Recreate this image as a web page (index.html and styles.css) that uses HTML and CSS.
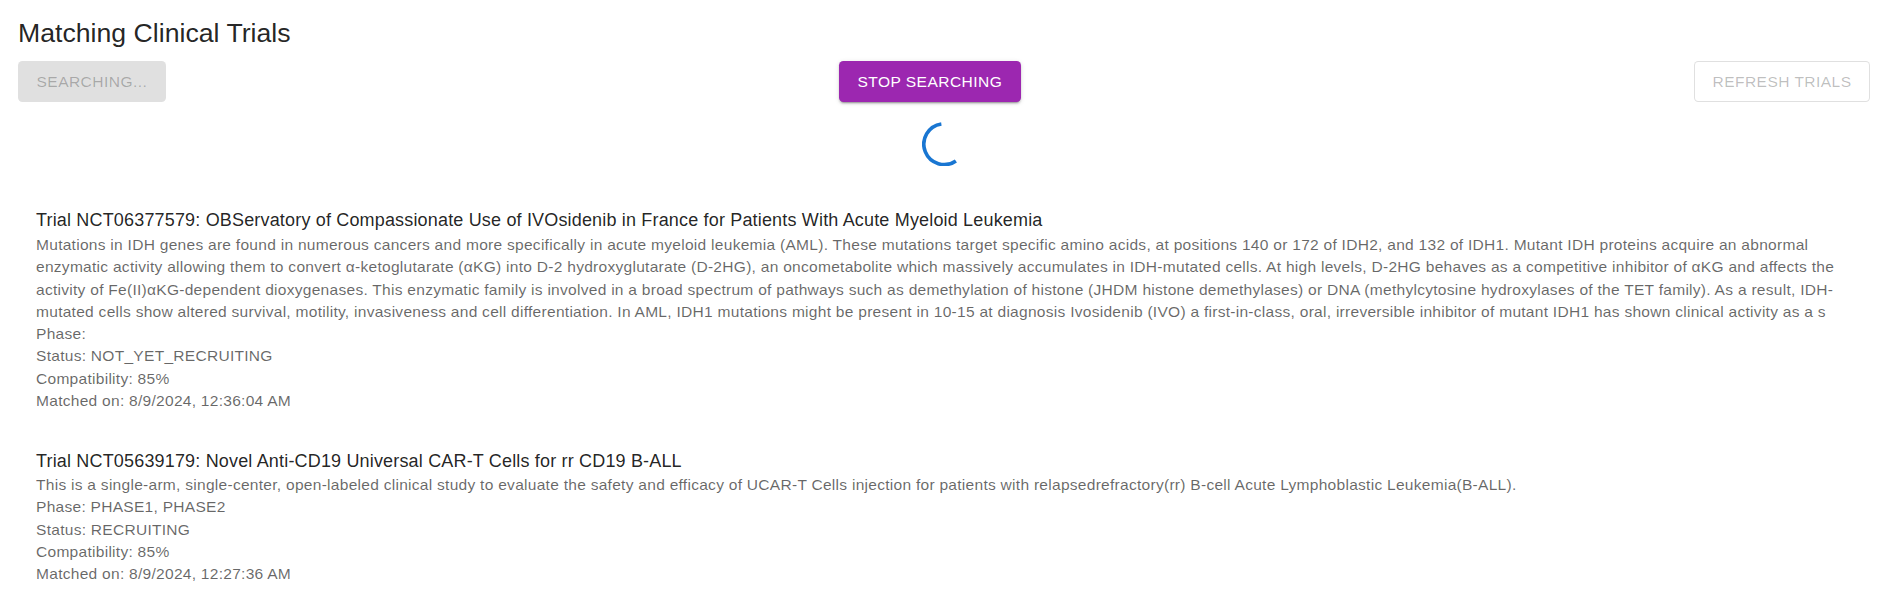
FILE: index.html
```html
<!DOCTYPE html>
<html lang="en">
<head>
<meta charset="utf-8">
<title>Matching Clinical Trials</title>
<link rel="stylesheet" href="styles.css">
</head>
<body>
<div class="page">
  <h1 class="heading">Matching Clinical Trials</h1>
  <div class="actions">
    <button class="btn btn-disabled" disabled>Searching...</button>
    <button class="btn btn-primary">Stop Searching</button>
    <button class="btn btn-outlined" disabled>Refresh Trials</button>
  </div>
  <div class="spinner-wrap">
    <svg class="spinner" viewBox="22 22 44 44" aria-hidden="true">
      <path d="M55.6 60.55 A20.2 20.2 0 1 1 41.19 24" fill="none" stroke="#1976d2" stroke-width="3.6"/>
    </svg>
  </div>
  <ul class="trials">
    <li class="trial">
      <div class="trial-title">Trial NCT06377579: OBServatory of Compassionate Use of IVOsidenib in France for Patients With Acute Myeloid Leukemia</div>
      <div class="trial-body">
        <div>Mutations in IDH genes are found in numerous cancers and more specifically in acute myeloid leukemia (AML). These mutations target specific amino acids, at positions 140 or 172 of IDH2, and 132 of IDH1. Mutant IDH proteins acquire an abnormal enzymatic activity allowing them to convert α-ketoglutarate (αKG) into D-2 hydroxyglutarate (D-2HG), an oncometabolite which massively accumulates in IDH-mutated cells. At high levels, D-2HG behaves as a competitive inhibitor of αKG and affects the activity of Fe(II)αKG-dependent dioxygenases. This enzymatic family is involved in a broad spectrum of pathways such as demethylation of histone (JHDM histone demethylases) or DNA (methylcytosine hydroxylases of the TET family). As a result, IDH-mutated cells show altered survival, motility, invasiveness and cell differentiation. In AML, IDH1 mutations might be present in 10-15 at diagnosis Ivosidenib (IVO) a first-in-class, oral, irreversible inhibitor of mutant IDH1 has shown clinical activity as a s</div>
        <div>Phase: </div>
        <div>Status: NOT_YET_RECRUITING</div>
        <div>Compatibility: 85%</div>
        <div>Matched on: 8/9/2024, 12:36:04 AM</div>
      </div>
    </li>
    <li class="trial">
      <div class="trial-title">Trial NCT05639179: Novel Anti-CD19 Universal CAR-T Cells for rr CD19 B-ALL</div>
      <div class="trial-body">
        <div>This is a single-arm, single-center, open-labeled clinical study to evaluate the safety and efficacy of UCAR-T Cells injection for patients with relapsedrefractory(rr) B-cell Acute Lymphoblastic Leukemia(B-ALL).</div>
        <div>Phase: PHASE1, PHASE2</div>
        <div>Status: RECRUITING</div>
        <div>Compatibility: 85%</div>
        <div>Matched on: 8/9/2024, 12:27:36 AM</div>
      </div>
    </li>
  </ul>
</div>
</body>
</html>
```

FILE: styles.css
```css
html, body {
  margin: 0;
  padding: 0;
  background: #fff;
}
body {
  font-family: "Liberation Sans", Arial, sans-serif;
  color: rgba(0, 0, 0, 0.87);
}
.page {
  padding: 0 12px 0 18px;
}
.heading {
  margin: 18px 0 0;
  font-size: 26.67px;
  line-height: 31px;
  font-weight: 400;
  color: rgba(0, 0, 0, 0.87);
}
.actions {
  margin-top: 12px;
  display: flex;
  justify-content: space-between;
  align-items: center;
}
.btn {
  font-family: "Liberation Sans", Arial, sans-serif;
  font-size: 15.55px;
  letter-spacing: 0.02857em;
  text-transform: uppercase;
  line-height: 27.2px;
  padding: 6.9px 18.5px;
  border-radius: 4.4px;
  border: 0;
  margin: 0;
  cursor: pointer;
}
.btn-disabled {
  background: rgba(0, 0, 0, 0.12);
  color: rgba(0, 0, 0, 0.26);
  cursor: default;
}
.btn-primary {
  background: #9c27b0;
  color: #fff;
  box-shadow: 0 3px 1px -2px rgba(0,0,0,0.2), 0 2px 2px 0 rgba(0,0,0,0.14), 0 1px 5px 0 rgba(0,0,0,0.12);
}
.btn-outlined {
  background: #fff;
  color: rgba(0, 0, 0, 0.26);
  border: 1px solid rgba(0, 0, 0, 0.12);
  padding: 5.9px 17.5px;
  cursor: default;
}
.spinner-wrap {
  display: flex;
  justify-content: center;
  margin-top: 20px;
}
.spinner {
  width: 44.4px;
  height: 44.4px;
  display: block;
}
.trials {
  list-style: none;
  margin: 32.2px 0 0;
  padding: 0;
  display: flex;
  flex-direction: column;
  gap: 17.8px;
}
.trial {
  padding: 8.9px 16px 8.9px 18px;
}
.trial-title {
  font-size: 18px;
  line-height: 26.67px;
  letter-spacing: 0.17px;
  color: rgba(0, 0, 0, 0.87);
}
.trial-body {
  font-size: 15.55px;
  line-height: 22.24px;
  letter-spacing: 0.265px;
  color: rgba(0, 0, 0, 0.6);
}
```
